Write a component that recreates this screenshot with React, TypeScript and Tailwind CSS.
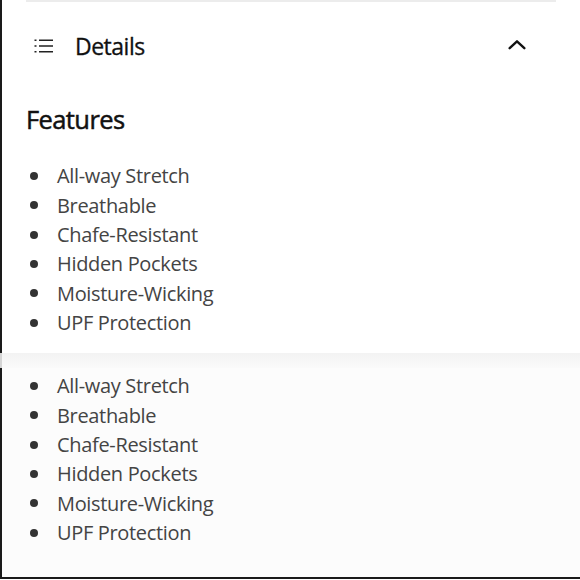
import React from "react";

const items = [
  "All-way Stretch",
  "Breathable",
  "Chafe-Resistant",
  "Hidden Pockets",
  "Moisture-Wicking",
  "UPF Protection",
];

function FeatureList() {
  return (
    <ul className="flex flex-col">
      {items.map((t) => (
        <li key={t} className="flex items-center h-[29.3px]">
          <span className="ml-[28px] w-[8px] h-[8px] rounded-full bg-[#333333] shrink-0" />
          <span className="ml-[19px] text-[20px] leading-[29.3px] tracking-[-0.33px] text-[#444444]">
            {t}
          </span>
        </li>
      ))}
    </ul>
  );
}

export default function App() {
  return (
    <div
      className="w-[580px] h-[580px] bg-white overflow-hidden flex flex-col"
      style={{ fontFamily: '"Open Sans", "Noto Sans", sans-serif' }}
    >
      <div className="h-[353px] border-l-2 border-[#1a1a1a] bg-white flex flex-col shrink-0">
        <div className="mx-[24px] h-[2px] bg-[#ececec]" />
        <div className="h-[88px] flex items-center">
          <svg
            className="ml-[32px]"
            width="20"
            height="14"
            viewBox="0 0 20 14"
            fill="none"
            stroke="#222"
            strokeWidth="1.5"
          >
            <path d="M5 1.25h14M5 7h14M5 12.75h14" />
            <path d="M0.5 1.25h2M0.5 7h2M0.5 12.75h2" />
          </svg>
          <span className="ml-[21px] text-[23px] leading-[32px] tracking-[-0.5px] text-[#111111] [-webkit-text-stroke:0.3px_#111111]">
            Details
          </span>
          <svg
            className="ml-auto mr-[52px] -mt-[2px]"
            width="22"
            height="22"
            viewBox="0 0 24 24"
            fill="none"
            stroke="#111"
            strokeWidth="2.6"
            strokeLinecap="round"
            strokeLinejoin="round"
          >
            <path d="M4 15.5 12 8l8 7.5" />
          </svg>
        </div>
        <div className="mt-[11.4px] ml-[24px] text-[25.5px] leading-[36px] tracking-[-0.6px] text-[#111111] [-webkit-text-stroke:0.5px_#111111]">
          Features
        </div>
        <div className="mt-[24px]">
          <FeatureList />
        </div>
      </div>
      <div className="h-[15px] shrink-0 border-l-2 border-[#d5d5d5] bg-gradient-to-b from-[#f3f3f3] to-[#fafafa]" />
      <div className="flex-1 border-l-2 border-b-2 border-[#1a1a1a] bg-[#fcfcfc] flex flex-col">
        <div className="mt-[3.4px]">
          <FeatureList />
        </div>
      </div>
      <div className="h-[1px] bg-white shrink-0" />
    </div>
  );
}
